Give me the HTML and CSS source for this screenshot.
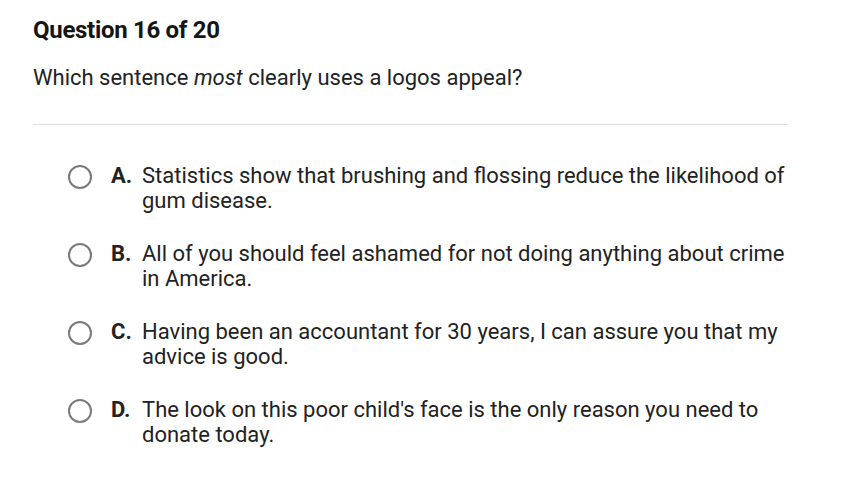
FILE: index.html
```html
<!DOCTYPE html>
<html>
<head>
<meta charset="utf-8">
<link rel="stylesheet" href="styles.css">
</head>
<body>
<div class="page">
  <h1 class="title">Question 16 of 20</h1>
  <p class="question">Which sentence <em>most</em> clearly uses a logos appeal?</p>
  <hr class="divider">
  <ul class="options">
    <li class="option"><span class="radio"></span><span class="letter">A.</span><span class="text">Statistics show that brushing and flossing reduce the likelihood of gum disease.</span></li>
    <li class="option"><span class="radio"></span><span class="letter">B.</span><span class="text">All of you should feel ashamed for not doing anything about crime in America.</span></li>
    <li class="option"><span class="radio"></span><span class="letter">C.</span><span class="text">Having been an accountant for 30 years, I can assure you that my advice is good.</span></li>
    <li class="option"><span class="radio"></span><span class="letter">D.</span><span class="text">The look on this poor child's face is the only reason you need to donate today.</span></li>
  </ul>
</div>
</body>
</html>
```
FILE: styles.css
```css
html, body {
  margin: 0;
  padding: 0;
  background: #ffffff;
}
body {
  font-family: Roboto, "Liberation Sans", sans-serif;
  color: #222222;
}
.page {
  width: 756px;
  padding: 17px 0 0 33px;
}
.title {
  margin: 0;
  font-size: 24px;
  line-height: 27px;
  font-weight: 700;
  color: #151515;
  letter-spacing: -0.3px;
}
.question {
  margin: 22px 0 0 0;
  font-size: 22px;
  line-height: 24px;
  color: #222222;
}
.divider {
  margin: 34px 0 0 0;
  border: 0;
  border-top: 1px solid #e0e0e0;
  height: 0;
}
.options {
  list-style: none;
  margin: 38px 0 0 0;
  padding: 0 0 0 34px;
}
.option {
  display: flex;
  align-items: flex-start;
  font-size: 22px;
  line-height: 25px;
  margin-bottom: 28px;
}
.radio {
  flex: none;
  width: 24px;
  height: 24px;
  box-sizing: border-box;
  border: 2px solid #7a7a7a;
  border-radius: 50%;
  margin-top: 2px;
  margin-left: 1px;
  margin-right: 19px;
}
.letter {
  flex: none;
  font-weight: 700;
  width: 31px;
}
.text {
  flex: 1;
}
```
